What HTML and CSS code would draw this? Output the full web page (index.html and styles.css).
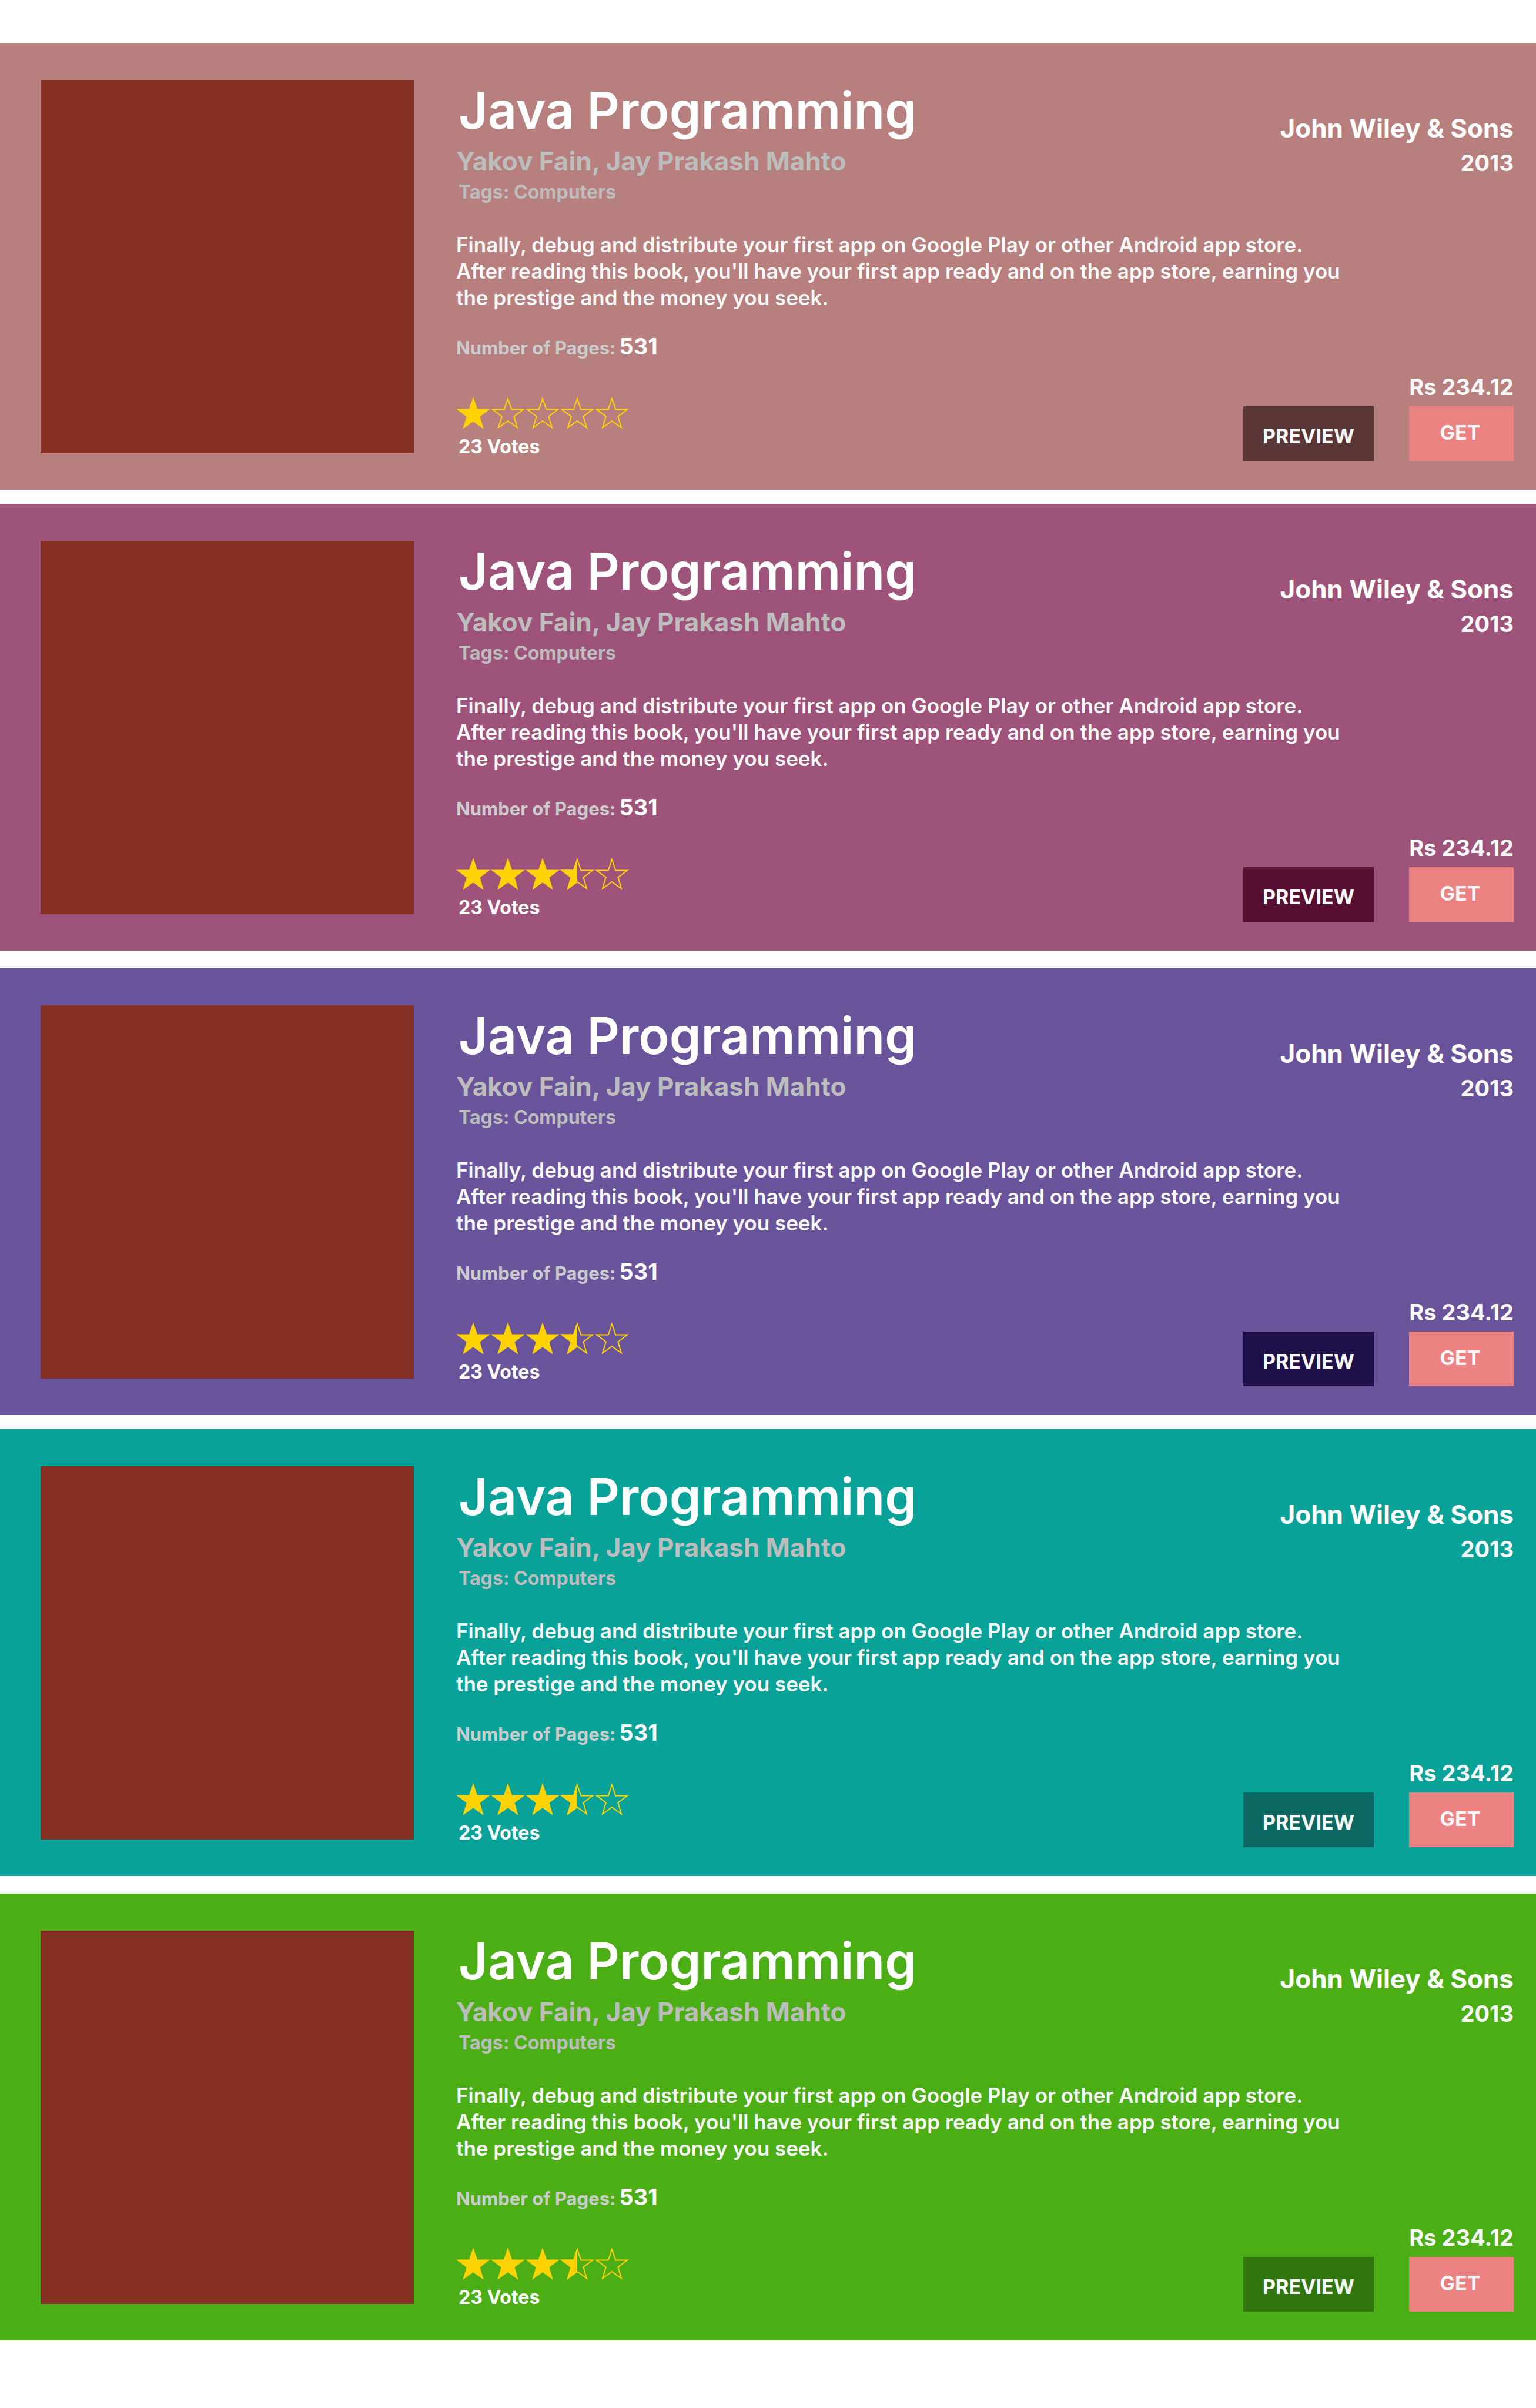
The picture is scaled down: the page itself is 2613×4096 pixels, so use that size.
FILE: index.html
```html
<!DOCTYPE html>
<html lang="en">
<head>
<meta charset="utf-8">
<title>Books</title>
<meta name="viewport" content="width=device-width, initial-scale=1">
<link rel="stylesheet" href="styles.css">
</head>
<body>
<svg class="sprite" width="0" height="0" aria-hidden="true">
  <defs>
    <path id="star-shape" d="M29 0 36 20.600H58L40.500 33.800 46.800 55 29 42.200 11.200 55 17.600 33.800 0 20.600H22Z"/>
    <clipPath id="star-clip"><use href="#star-shape"/></clipPath>
    <symbol id="star-full" viewBox="0 0 58 56"><use href="#star-shape" fill="#ffd203"/></symbol>
    <symbol id="star-empty" viewBox="0 0 58 56"><use href="#star-shape" fill="none" stroke="#ffd203" stroke-width="4" clip-path="url(#star-clip)"/></symbol>
    <symbol id="star-half" viewBox="0 0 58 56"><path d="M29 0V42.200L11.200 55 17.600 33.800 0 20.600H22Z" fill="#ffd203"/><use href="#star-shape" fill="none" stroke="#ffd203" stroke-width="4" clip-path="url(#star-clip)"/></symbol>
  </defs>
</svg>
<main class="books">
  <article class="book book--rose">
    <div class="cover"></div>
    <div class="info">
      <header class="head">
        <div>
          <h2 class="title">Java Programming</h2>
          <p class="authors">Yakov Fain, Jay Prakash Mahto</p>
          <p class="tags">Tags: Computers</p>
        </div>
        <div class="imprint">
          <p class="publisher">John Wiley &amp; Sons</p>
          <p class="year">2013</p>
        </div>
      </header>
      <p class="summary">Finally, debug and distribute your first app on Google Play or other Android app store.<br>After reading this book, you'll have your first app ready and on the app store, earning you the prestige and the money you seek.</p>
      <p class="pages"><span class="label">Number of Pages:</span><span>531</span></p>
      <footer class="foot">
        <div class="rating">
          <div class="stars" role="img" aria-label="1 out of 5 stars">
            <svg class="star"><use href="#star-full"/></svg>
            <svg class="star"><use href="#star-empty"/></svg>
            <svg class="star"><use href="#star-empty"/></svg>
            <svg class="star"><use href="#star-empty"/></svg>
            <svg class="star"><use href="#star-empty"/></svg>
          </div>
          <p class="votes">23 Votes</p>
        </div>
        <div class="buy">
          <p class="price">Rs 234.12</p>
          <div class="actions">
            <button class="btn preview" type="button">PREVIEW</button>
            <button class="btn get" type="button">GET</button>
          </div>
        </div>
      </footer>
    </div>
  </article>

  <article class="book book--plum">
    <div class="cover"></div>
    <div class="info">
      <header class="head">
        <div>
          <h2 class="title">Java Programming</h2>
          <p class="authors">Yakov Fain, Jay Prakash Mahto</p>
          <p class="tags">Tags: Computers</p>
        </div>
        <div class="imprint">
          <p class="publisher">John Wiley &amp; Sons</p>
          <p class="year">2013</p>
        </div>
      </header>
      <p class="summary">Finally, debug and distribute your first app on Google Play or other Android app store.<br>After reading this book, you'll have your first app ready and on the app store, earning you the prestige and the money you seek.</p>
      <p class="pages"><span class="label">Number of Pages:</span><span>531</span></p>
      <footer class="foot">
        <div class="rating">
          <div class="stars" role="img" aria-label="3.5 out of 5 stars">
            <svg class="star"><use href="#star-full"/></svg>
            <svg class="star"><use href="#star-full"/></svg>
            <svg class="star"><use href="#star-full"/></svg>
            <svg class="star"><use href="#star-half"/></svg>
            <svg class="star"><use href="#star-empty"/></svg>
          </div>
          <p class="votes">23 Votes</p>
        </div>
        <div class="buy">
          <p class="price">Rs 234.12</p>
          <div class="actions">
            <button class="btn preview" type="button">PREVIEW</button>
            <button class="btn get" type="button">GET</button>
          </div>
        </div>
      </footer>
    </div>
  </article>

  <article class="book book--violet">
    <div class="cover"></div>
    <div class="info">
      <header class="head">
        <div>
          <h2 class="title">Java Programming</h2>
          <p class="authors">Yakov Fain, Jay Prakash Mahto</p>
          <p class="tags">Tags: Computers</p>
        </div>
        <div class="imprint">
          <p class="publisher">John Wiley &amp; Sons</p>
          <p class="year">2013</p>
        </div>
      </header>
      <p class="summary">Finally, debug and distribute your first app on Google Play or other Android app store.<br>After reading this book, you'll have your first app ready and on the app store, earning you the prestige and the money you seek.</p>
      <p class="pages"><span class="label">Number of Pages:</span><span>531</span></p>
      <footer class="foot">
        <div class="rating">
          <div class="stars" role="img" aria-label="3.5 out of 5 stars">
            <svg class="star"><use href="#star-full"/></svg>
            <svg class="star"><use href="#star-full"/></svg>
            <svg class="star"><use href="#star-full"/></svg>
            <svg class="star"><use href="#star-half"/></svg>
            <svg class="star"><use href="#star-empty"/></svg>
          </div>
          <p class="votes">23 Votes</p>
        </div>
        <div class="buy">
          <p class="price">Rs 234.12</p>
          <div class="actions">
            <button class="btn preview" type="button">PREVIEW</button>
            <button class="btn get" type="button">GET</button>
          </div>
        </div>
      </footer>
    </div>
  </article>

  <article class="book book--teal">
    <div class="cover"></div>
    <div class="info">
      <header class="head">
        <div>
          <h2 class="title">Java Programming</h2>
          <p class="authors">Yakov Fain, Jay Prakash Mahto</p>
          <p class="tags">Tags: Computers</p>
        </div>
        <div class="imprint">
          <p class="publisher">John Wiley &amp; Sons</p>
          <p class="year">2013</p>
        </div>
      </header>
      <p class="summary">Finally, debug and distribute your first app on Google Play or other Android app store.<br>After reading this book, you'll have your first app ready and on the app store, earning you the prestige and the money you seek.</p>
      <p class="pages"><span class="label">Number of Pages:</span><span>531</span></p>
      <footer class="foot">
        <div class="rating">
          <div class="stars" role="img" aria-label="3.5 out of 5 stars">
            <svg class="star"><use href="#star-full"/></svg>
            <svg class="star"><use href="#star-full"/></svg>
            <svg class="star"><use href="#star-full"/></svg>
            <svg class="star"><use href="#star-half"/></svg>
            <svg class="star"><use href="#star-empty"/></svg>
          </div>
          <p class="votes">23 Votes</p>
        </div>
        <div class="buy">
          <p class="price">Rs 234.12</p>
          <div class="actions">
            <button class="btn preview" type="button">PREVIEW</button>
            <button class="btn get" type="button">GET</button>
          </div>
        </div>
      </footer>
    </div>
  </article>

  <article class="book book--green">
    <div class="cover"></div>
    <div class="info">
      <header class="head">
        <div>
          <h2 class="title">Java Programming</h2>
          <p class="authors">Yakov Fain, Jay Prakash Mahto</p>
          <p class="tags">Tags: Computers</p>
        </div>
        <div class="imprint">
          <p class="publisher">John Wiley &amp; Sons</p>
          <p class="year">2013</p>
        </div>
      </header>
      <p class="summary">Finally, debug and distribute your first app on Google Play or other Android app store.<br>After reading this book, you'll have your first app ready and on the app store, earning you the prestige and the money you seek.</p>
      <p class="pages"><span class="label">Number of Pages:</span><span>531</span></p>
      <footer class="foot">
        <div class="rating">
          <div class="stars" role="img" aria-label="3.5 out of 5 stars">
            <svg class="star"><use href="#star-full"/></svg>
            <svg class="star"><use href="#star-full"/></svg>
            <svg class="star"><use href="#star-full"/></svg>
            <svg class="star"><use href="#star-half"/></svg>
            <svg class="star"><use href="#star-empty"/></svg>
          </div>
          <p class="votes">23 Votes</p>
        </div>
        <div class="buy">
          <p class="price">Rs 234.12</p>
          <div class="actions">
            <button class="btn preview" type="button">PREVIEW</button>
            <button class="btn get" type="button">GET</button>
          </div>
        </div>
      </footer>
    </div>
  </article>
</main>
</body>
</html>
```
FILE: styles.css
```css
*,
*::before,
*::after {
  box-sizing: border-box;
}

body {
  margin: 0;
  background: #fff;
  color: #f8f8f8;
  font-family: Inter, "Liberation Sans", sans-serif;
  font-weight: 700;
}

h2,
p {
  margin: 0;
}

.sprite {
  position: absolute;
}

.books {
  padding: 73px 0 114px;
}

/* Book card */
.book {
  display: flex;
  align-items: flex-start;
  gap: 72px;
  padding: 63px 38px 49px 69px;
  background: var(--card);
}

.book:nth-child(even) {
  margin: 24px 0 30px;
}

.book--rose {
  --card: #b77f7e;
  --preview: #5a3636;
}

.book--plum {
  --card: #9e537a;
  --preview: #570f32;
}

.book--violet {
  --card: #69549c;
  --preview: #1f0f48;
}

.book--teal {
  --card: #09a298;
  --preview: #0c6862;
}

.book--green {
  --card: #4bae14;
  --preview: #30750e;
}

.cover {
  flex: none;
  width: 635px;
  aspect-ratio: 1;
  background: #852f23;
}

.info {
  flex: 1;
  min-width: 0;
}

.head,
.foot {
  display: flex;
  justify-content: space-between;
  align-items: flex-start;
}

.title {
  padding-left: 4px;
  color: #fff;
  font-size: 86px;
  font-weight: 600;
  line-height: 104px;
}

.authors {
  margin-top: 7px;
  color: #bdbdbd;
  font-size: 44px;
  line-height: 54px;
}

.tags {
  margin-top: 6px;
  padding-left: 4px;
  color: #bdbdbd;
  font-size: 32px;
  line-height: 40px;
}

.imprint {
  padding-top: 55px;
  text-align: right;
}

.publisher {
  color: #fff;
  font-size: 44px;
  line-height: 54px;
}

.year {
  margin-top: 10px;
  font-size: 38px;
  line-height: 44px;
}

.summary {
  max-width: 1530px;
  margin-top: 47px;
  font-size: 35px;
  font-weight: 600;
  line-height: 45px;
}

.pages {
  display: flex;
  align-items: baseline;
  gap: 6px;
  height: 44px;
  margin-top: 38px;
  color: #fff;
  font-size: 38px;
  line-height: 44px;
}

.label {
  color: #ccc;
  font-size: 31px;
  line-height: 38px;
}

.foot {
  margin-top: 25px;
}

.rating {
  padding-top: 39px;
}

.stars {
  display: flex;
  gap: 1px;
}

.star {
  width: 58px;
  height: 56px;
}

.votes {
  margin-top: 9px;
  padding-left: 4px;
  color: #fff;
  font-size: 32px;
  line-height: 40px;
}

.price {
  font-size: 38px;
  line-height: 44px;
  text-align: right;
}

.actions {
  display: flex;
  gap: 60px;
  margin-top: 11px;
}

.btn {
  height: 93px;
  border: 0;
  color: #f8f8f8;
  font: 700 34px/44px Inter, "Liberation Sans", sans-serif;
  text-align: center;
  cursor: pointer;
}

.preview {
  width: 222px;
  padding: 8px 0 0;
  background: var(--preview);
}

.get {
  width: 178px;
  padding: 0 4px 4px 0;
  background: #eb8281;
}
```
